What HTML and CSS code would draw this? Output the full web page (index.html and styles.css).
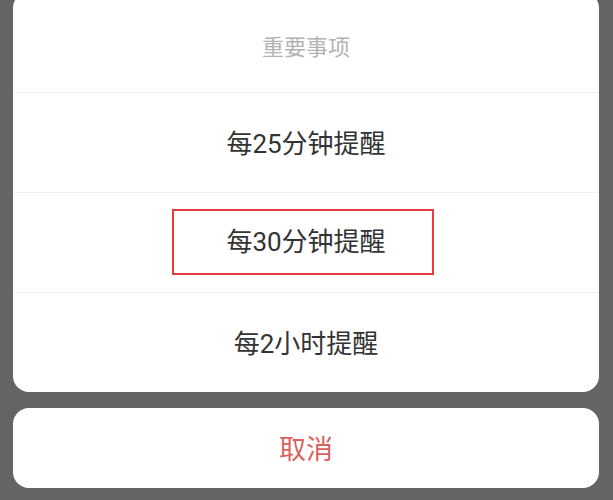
FILE: index.html
```html
<!DOCTYPE html>
<html lang="zh-CN">
<head>
    <meta charset="UTF-8">
    <meta name="viewport" content="width=device-width, initial-scale=1.0">
    <title>提醒设置</title>
    <link rel="stylesheet" href="styles.css">
</head>
<body>
    <div class="sheet">
        <div class="card options">
            <div class="title">重要事项</div>
            <div class="option">每25分钟提醒</div>
            <div class="option"><span class="marked">每30分钟提醒</span></div>
            <div class="option">每2小时提醒</div>
        </div>
        <div class="card cancel">取消</div>
    </div>
</body>
</html>
```

FILE: styles.css
```css
body {
    margin: 0;
    height: 500px;
    overflow: hidden;
    background-color: #646464;
    font-family: Roboto, "Noto Sans CJK SC", sans-serif;
}
.sheet {
    display: flex;
    flex-direction: column;
    gap: 16px;
    padding: 0 14px 0 13px;
    margin-top: -8px;
}
.card {
    background-color: #fff;
    border-radius: 16px;
}
.options {
    display: flex;
    flex-direction: column;
}
.title {
    height: 100px;
    padding-top: 5px;
    box-sizing: border-box;
    display: flex;
    justify-content: center;
    align-items: center;
    font-size: 22px;
    color: #b3b3b3;
}
.option {
    height: 100px;
    padding-bottom: 2px;
    border-top: 1px solid #f1f1f1;
    box-sizing: border-box;
    display: flex;
    justify-content: center;
    align-items: center;
    font-size: 26px;
    color: #333;
}
.marked {
    border: 2px solid #e53c3c;
    padding: 16px 46px 16px 52px;
    margin-right: 6px;
    line-height: 30px;
}
.cancel {
    height: 80px;
    padding-bottom: 2px;
    box-sizing: border-box;
    display: flex;
    justify-content: center;
    align-items: center;
    font-size: 27px;
    color: #d9625d;
}
```
